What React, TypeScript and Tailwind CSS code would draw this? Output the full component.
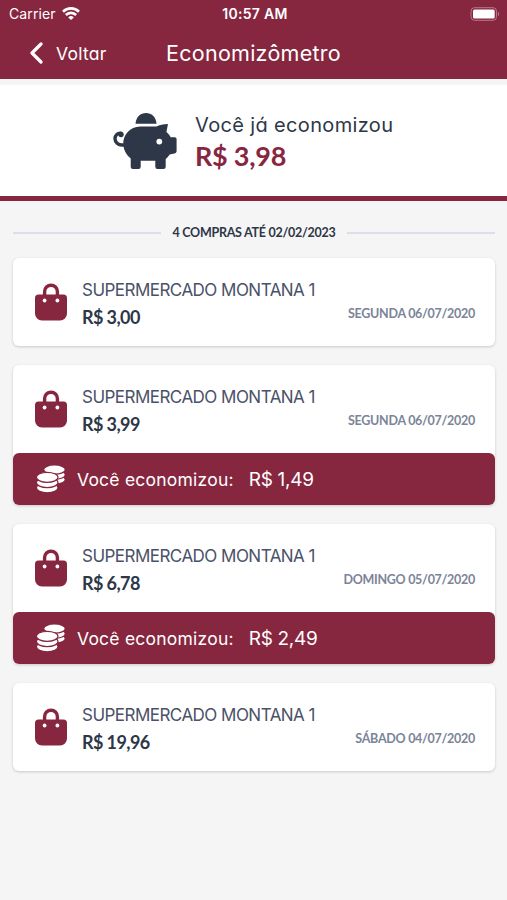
interface Purchase {
  id: number
  store: string
  price: string
  date: string
  saved?: string
}

const PURCHASES: Purchase[] = [
  { id: 1, store: 'SUPERMERCADO MONTANA 1', price: 'R$ 3,00', date: 'SEGUNDA 06/07/2020' },
  { id: 2, store: 'SUPERMERCADO MONTANA 1', price: 'R$ 3,99', date: 'SEGUNDA 06/07/2020', saved: 'R$ 1,49' },
  { id: 3, store: 'SUPERMERCADO MONTANA 1', price: 'R$ 6,78', date: 'DOMINGO 05/07/2020', saved: 'R$ 2,49' },
  { id: 4, store: 'SUPERMERCADO MONTANA 1', price: 'R$ 19,96', date: 'SÁBADO 04/07/2020' },
]

function BagIcon() {
  return (
    <svg viewBox="0 0 34 38" className="h-[38px] w-[34px] shrink-0">
      <path d="M10.6 15V8.600a6.400 6.400 0 0 1 12.800 0V15" fill="none" stroke="#87263f" strokeWidth="3.400" />
      <path d="M4.500 11.500h25a3.500 3.500 0 0 1 3.500 3.500v15.500a7 7 0 0 1-7 7H8a7 7 0 0 1-7-7V15a3.500 3.500 0 0 1 3.500-3.500z" fill="#87263f" />
      <circle cx="10.600" cy="17.500" r="1.900" fill="#fff" />
      <circle cx="23.400" cy="17.500" r="1.900" fill="#fff" />
    </svg>
  )
}

function PiggyIcon() {
  return (
    <svg viewBox="0 0 64 58" className="h-[58px] w-[64px] shrink-0" fill="#2d3748">
      <path d="M22.500 11.700C23 5 27.500 1 33 1s10 4 10.500 10.700z" />
      <path d="M27 14.600h16.500c2.500-1.800 7-2.700 11.500-2.700l-1.600 8c2 1.700 3.400 3.400 4.300 5.300h4.100a1.800 1.800 0 0 1 1.800 1.800v12c0 1.400-1 2.300-2.300 2.600l-4.600.9c-1.200 1.800-2.500 3.300-4 4.600v7.700a2.200 2.200 0 0 1-2.200 2.200h-6a2.200 2.200 0 0 1-2.200-2.200v-6H27.700v6a2.200 2.200 0 0 1-2.200 2.200h-5.600a2.200 2.200 0 0 1-2.200-2.200v-8.300C13.500 43 10.800 38.500 10.300 33c-.8-10 7-18.400 16.700-18.400z" />
      <path d="M12.500 33H9a7 6.400 0 0 1-7-6.300c0-3.500 2.800-5.900 5.800-5.400" fill="none" stroke="#2d3748" strokeWidth="3.400" strokeLinecap="round" />
      <circle cx="8" cy="22.500" r="2.700" />
      <circle cx="46.300" cy="29.600" r="2.900" fill="#fff" />
    </svg>
  )
}

function CoinsIcon() {
  return (
    <svg viewBox="0 0 28 28" className="h-[28px] w-[28px] shrink-0" fill="#fff" stroke="#87263f" strokeWidth="1.200">
      <ellipse cx="17.500" cy="14.600" rx="10.800" ry="4.600" />
      <ellipse cx="17.500" cy="9.700" rx="10.800" ry="4.600" />
      <ellipse cx="17.500" cy="4.600" rx="10.800" ry="4.600" />
      <ellipse cx="10.200" cy="22.800" rx="10.800" ry="5" />
      <ellipse cx="10.200" cy="17.600" rx="10.800" ry="5" />
      <ellipse cx="10.200" cy="12.300" rx="10.800" ry="5" />
    </svg>
  )
}

function StatusBar() {
  return (
    <div className="flex h-[27px] items-center justify-between pl-[9px] pr-[6px] font-['Inter',sans-serif] text-white [font-feature-settings:normal]">
      <div className="flex w-[120px] items-center gap-[6px]">
        <span className="text-[14px] tracking-[0.1px]">Carrier</span>
        <svg viewBox="0 0 18 13" className="h-[13px] w-[18px]" fill="none" stroke="#fff" strokeWidth="2.600">
          <path d="M1 4.700a11.400 11.400 0 0 1 16 0" />
          <path d="M3.900 8a7.200 7.200 0 0 1 10.200 0" />
          <path d="M9 13L6.200 10.400a4 4 0 0 1 5.600 0z" fill="#fff" stroke="none" />
        </svg>
      </div>
      <span className="text-[14px] font-semibold tracking-[0.300px]">10:57 AM</span>
      <div className="flex w-[120px] justify-end">
        <svg viewBox="0 0 31 14" className="h-[14px] w-[31px]">
          <rect x="1" y="0.700" width="25.500" height="12.600" rx="3.500" fill="none" stroke="#b87a8b" />
          <rect x="3" y="2.500" width="21.700" height="9" rx="1.500" fill="#fff" />
          <path d="M28 4.800v4.400c1.600-.7 1.600-3.700 0-4.400z" fill="#b87a8b" />
        </svg>
      </div>
    </div>
  )
}

function PurchaseCard({ purchase }: { purchase: Purchase }) {
  return (
    <div className="rounded-[6px] bg-white shadow-[0_1px_3px_rgba(0,0,0,0.18)]">
      <div className="flex h-[88px] items-center pl-[21px] pr-[20px]">
        <BagIcon />
        <div className="ml-[14px] flex-1 pt-[4px]">
          <p className="whitespace-nowrap text-[17px] leading-[26px] tracking-[-0.530px] text-[#4a5268]">{purchase.store}</p>
          <div className="flex items-center justify-between font-['Lato',sans-serif] font-bold">
            <span className="text-[18px] leading-[28px] tracking-[-0.600px] text-[#2d3748]">{purchase.price}</span>
            <span className="mb-[6px] text-[12.500px] leading-[18px] tracking-[-0.280px] text-[#7b8498]">{purchase.date}</span>
          </div>
        </div>
      </div>
      {purchase.saved && (
        <div className="flex h-[52px] items-center rounded-[6px] bg-[#87263f] pl-[24px] text-white">
          <CoinsIcon />
          <span className="ml-[12px] pt-[2px] text-[17.500px] tracking-[0.220px]">Você economizou:</span>
          <span className="ml-[15px] pt-[2px] text-[19px] tracking-[-0.300px]">{purchase.saved}</span>
        </div>
      )}
    </div>
  )
}

export default function App() {
  return (
    <div className="min-h-[900px] bg-[#f5f5f5] font-['Inter',sans-serif] [font-feature-settings:'cv11']">
      <header className="h-[79px] bg-[#87263f] text-white">
        <StatusBar />
        <div className="grid h-[52px] grid-cols-[1fr_auto_1fr] items-center">
          <div className="flex items-center pl-[29px]">
            <svg viewBox="0 0 14 22" className="h-[22px] w-[14px]" fill="none" stroke="#fff" strokeWidth="3.200" strokeLinecap="round" strokeLinejoin="round">
              <path d="M12 2L3 11l9 9" />
            </svg>
            <span className="ml-[13px] pt-[3px] text-[17.500px] tracking-[0.250px]">Voltar</span>
          </div>
          <h1 className="text-[21.500px] tracking-[0.270px]">Economizômetro</h1>
        </div>
      </header>

      <section className="mt-[6px] flex h-[116px] items-center border-b-[5px] border-[#87263f] bg-white pl-[113px]">
        <PiggyIcon />
        <div className="ml-[18px] pb-px">
          <p className="pt-px text-[20px] leading-[30px] tracking-[0.350px] text-[#2d3748]">Você já economizou</p>
          <p className="font-['Lato',sans-serif] text-[27px] font-bold leading-[32px] tracking-[-0.250px] text-[#87263f]">R$ 3,98</p>
        </div>
      </section>

      <main className="pl-[13px] pr-[12px]">
        <div className="flex h-[57px] items-center gap-[12px] pt-[7px]">
          <div className="h-[2px] flex-1 bg-[#dcdfea]" />
          <span className="pt-px font-['Lato',sans-serif] text-[12.500px] font-bold tracking-[-0.270px] text-[#2d3748]">4 COMPRAS ATÉ 02/02/2023</span>
          <div className="h-[2px] flex-1 bg-[#dcdfea]" />
        </div>
        <div className="flex flex-col gap-[19px]">
          {PURCHASES.map(p => (
            <PurchaseCard key={p.id} purchase={p} />
          ))}
        </div>
      </main>
    </div>
  )
}
